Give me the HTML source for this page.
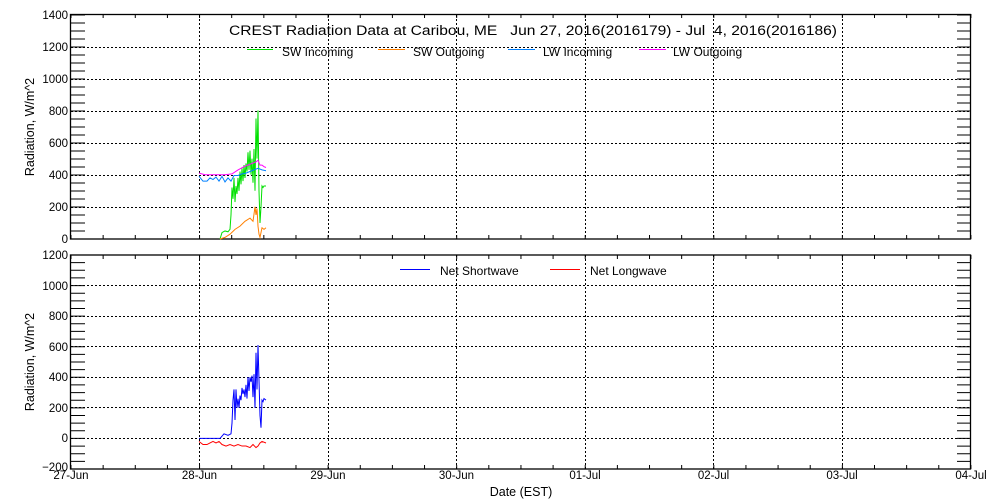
<!DOCTYPE html>
<html><head><meta charset="utf-8"><style>
html,body{margin:0;padding:0;background:#fff;}
svg{display:block;font-family:"Liberation Sans",sans-serif;}
text{white-space:pre;}
</style></head><body>
<svg width="1000" height="500" viewBox="0 0 1000 500" xmlns="http://www.w3.org/2000/svg">
<rect width="1000" height="500" fill="#fff"/>
<g stroke="#000" stroke-width="1" stroke-dasharray="2 2" fill="none">
<path d="M199.5 15V239M328.5 15V239M456.5 15V239M585.5 15V239M713.5 15V239M842.5 15V239"/>
<path d="M71 207.5H971M71 175.5H971M71 143.5H971M71 111.5H971M71 79.5H971M71 47.5H971"/>
<path d="M199.5 255V469M328.5 255V469M456.5 255V469M585.5 255V469M713.5 255V469M842.5 255V469"/>
<path d="M71 438.5H971M71 407.5H971M71 377.5H971M71 346.5H971M71 316.5H971M71 285.5H971"/>
</g>
<g stroke="#000" fill="none">
<line x1="78" y1="239.5" x2="78" y2="14" stroke-width="14" stroke-dasharray="1 7"/>
<line x1="963.5" y1="239.5" x2="963.5" y2="14" stroke-width="13" stroke-dasharray="1 7"/>
<line x1="78" y1="469.5" x2="78" y2="255" stroke-width="14" stroke-dasharray="1 6.643"/>
<line x1="963.5" y1="469.5" x2="963.5" y2="255" stroke-width="13" stroke-dasharray="1 6.643"/>
<line x1="70.5" y1="237" x2="972" y2="237" stroke-width="4" stroke-dasharray="1 31.14"/>
<line x1="70.5" y1="16" x2="972" y2="16" stroke-width="4" stroke-dasharray="1 31.14"/>
<line x1="70.5" y1="467" x2="972" y2="467" stroke-width="4" stroke-dasharray="1 31.14"/>
<line x1="70.5" y1="257" x2="972" y2="257" stroke-width="4" stroke-dasharray="1 31.14"/>
<rect x="70.5" y="14.5" width="900" height="224.5" stroke-width="1.3"/>
<rect x="70.5" y="255" width="900" height="214" stroke-width="1.3"/>
</g>
<g fill="none" transform="translate(0,239) scale(1,-0.1607)">
<polyline vector-effect="non-scaling-stroke" stroke-width="1" stroke="#00e000" points="220,0 222,40 225,50 228,45 230,60 231,150 232,320 233,250 234,380 235,230 236,330 237,280 238,380 239,300 240,420 241,340 242,440 243,360 244,460 245,380 246,470 247,420 248,540 249,430 250,550 251,400 252,500 253,350 254,560 255,300 256,750 257,500 258,800 259,300 260,100 261,200 262,330 263,320 264,330 266,330"/>
<polyline vector-effect="non-scaling-stroke" stroke-width="1" stroke="#ff8000" points="220,0 225,10 230,30 235,60 240,80 245,110 250,130 253,110 255,200 256,150 257,190 258,80 259,30 260,10 262,70 264,60 266,70"/>
<polyline vector-effect="non-scaling-stroke" stroke-width="1" stroke="#0080ff" points="199,390 203,360 207,360 210,380 213,370 216,385 219,360 222,390 225,355 228,380 231,360 234,395 238,395 242,405 246,410 250,420 254,430 258,440 262,430 266,425"/>
<polyline vector-effect="non-scaling-stroke" stroke-width="1" stroke="#ff00ff" points="199,410 205,400 215,400 225,400 232,405 238,430 244,450 250,465 256,480 258,490 260,460 262,460 264,450 266,445"/>
</g>
<g fill="none" transform="translate(0,438.4) scale(1,-0.153)">
<polyline vector-effect="non-scaling-stroke" stroke-width="1" stroke="#0000ff" points="199,0 220,0 224,30 228,20 231,30 232,100 233,250 234,320 235,120 236,320 237,200 238,260 239,200 240,280 241,250 242,330 243,290 244,320 245,270 246,350 247,260 248,400 249,310 250,400 251,370 252,410 253,270 254,420 255,200 256,560 257,320 258,610 259,380 260,150 261,70 262,250 263,240 264,260 266,250"/>
<polyline vector-effect="non-scaling-stroke" stroke-width="1" stroke="#ff0000" points="199,-20 203,-40 207,-40 210,-30 213,-20 216,-30 219,-20 222,-40 226,-50 230,-40 234,-50 238,-40 242,-50 246,-50 250,-60 253,-40 256,-60 258,-50 260,-30 262,-20 266,-30"/>
</g>
<g stroke-width="1">
<line x1="247" y1="49.5" x2="273" y2="49.5" stroke="#00e000"/>
<line x1="378" y1="49.5" x2="405" y2="49.5" stroke="#ff8000"/>
<line x1="508" y1="49.5" x2="535" y2="49.5" stroke="#0080ff"/>
<line x1="639" y1="49.5" x2="666" y2="49.5" stroke="#ff00ff"/>
<line x1="400" y1="269.5" x2="430" y2="269.5" stroke="#0000ff"/>
<line x1="550" y1="269.5" x2="580" y2="269.5" stroke="#ff0000"/>
</g>
<g font-size="12" fill="#000">
<text x="229" y="35" font-size="13.5" textLength="608" lengthAdjust="spacingAndGlyphs">CREST Radiation Data at Caribou, ME   Jun 27, 2016(2016179) - Jul  4, 2016(2016186)</text>
<text x="282" y="56">SW Incoming</text>
<text x="413" y="56">SW Outgoing</text>
<text x="543" y="56">LW Incoming</text>
<text x="673" y="56">LW Outgoing</text>
<text x="440" y="275">Net Shortwave</text>
<text x="590" y="275">Net Longwave</text>
</g>
<g font-size="11.5" fill="#000" text-anchor="end">
<text x="68" y="19">1400</text><text x="68" y="51">1200</text><text x="68" y="83">1000</text>
<text x="68" y="115">800</text><text x="68" y="147">600</text><text x="68" y="179">400</text>
<text x="68" y="211">200</text><text x="68" y="243">0</text>
<text x="68" y="259">1200</text><text x="68" y="290">1000</text><text x="68" y="320">800</text>
<text x="68" y="351">600</text><text x="68" y="381">400</text><text x="68" y="412">200</text>
<text x="68" y="442">0</text><text x="68" y="471">−200</text>
</g>
<g font-size="11.5" fill="#000" text-anchor="middle">
<text x="71" y="479">27-Jun</text><text x="199.5" y="479">28-Jun</text><text x="328" y="479">29-Jun</text>
<text x="456.5" y="479">30-Jun</text><text x="585" y="479">01-Jul</text><text x="713.5" y="479">02-Jul</text>
<text x="842" y="479">03-Jul</text><text x="971" y="479">04-Jul</text>
<text x="521" y="496" font-size="12.5">Date (EST)</text>
<text transform="translate(34,127) rotate(-90)" font-size="12.5">Radiation, W/m^2</text>
<text transform="translate(34,362) rotate(-90)" font-size="12.5">Radiation, W/m^2</text>
</g>
</svg>
</body></html>
